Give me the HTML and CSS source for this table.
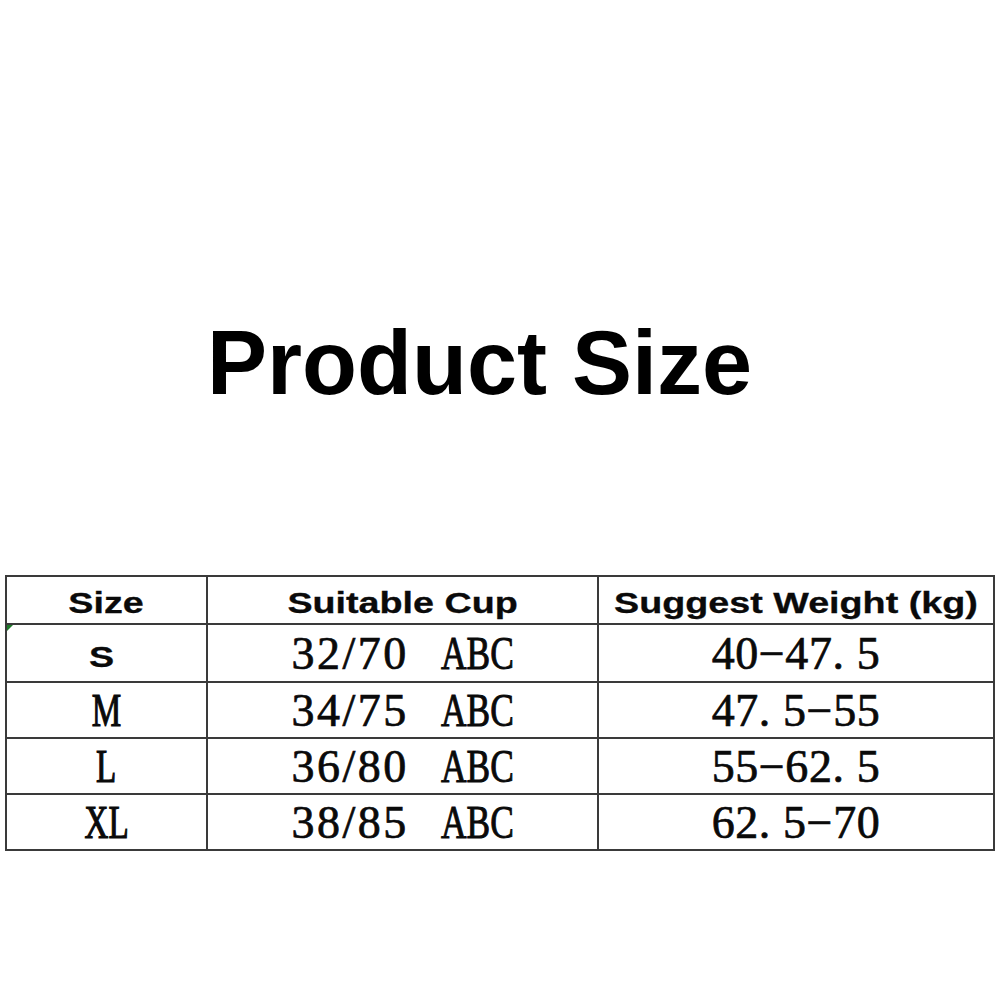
FILE: index.html
```html
<!DOCTYPE html>
<html lang="en">
<head>
<meta charset="utf-8">
<title>Product Size</title>
<link rel="stylesheet" href="styles.css">
</head>
<body>
<main class="page">
  <h1 class="title">Product Size</h1>
  <table class="size-table">
    <colgroup>
      <col class="c1">
      <col class="c2">
      <col class="c3">
    </colgroup>
    <thead>
      <tr class="head-row">
        <th><span class="wide">Size</span></th>
        <th><span class="wide">Suitable Cup</span></th>
        <th><span class="wide">Suggest Weight (kg)</span></th>
      </tr>
    </thead>
    <tbody>
      <tr class="row first">
        <td class="size marked"><span class="wide shift">S</span></td>
        <td><span class="num">32/70</span><span class="abc">ABC</span></td>
        <td><span class="wt">40−47. 5</span></td>
      </tr>
      <tr class="row">
        <td class="size"><span class="narrow">M</span></td>
        <td><span class="num">34/75</span><span class="abc">ABC</span></td>
        <td><span class="wt">47. 5−55</span></td>
      </tr>
      <tr class="row">
        <td class="size"><span class="narrow">L</span></td>
        <td><span class="num">36/80</span><span class="abc">ABC</span></td>
        <td><span class="wt">55−62. 5</span></td>
      </tr>
      <tr class="row">
        <td class="size"><span class="narrow">XL</span></td>
        <td><span class="num">38/85</span><span class="abc">ABC</span></td>
        <td><span class="wt">62. 5−70</span></td>
      </tr>
    </tbody>
  </table>
</main>
</body>
</html>
```
FILE: styles.css
```css
html, body {
  margin: 0;
  padding: 0;
  background: #ffffff;
}

.page {
  width: 1000px;
  height: 1000px;
  padding-top: 313px;
  box-sizing: border-box;
}

.title {
  margin: 0;
  padding-left: 207px;
  font-family: "Liberation Sans", Arial, sans-serif;
  font-weight: 700;
  font-size: 90px;
  line-height: 100px;
  color: #000;
  white-space: nowrap;
}

.size-table {
  margin: 162px 0 0 5px;
  width: 988px;
  border-collapse: collapse;
  table-layout: fixed;
}

.c1 { width: 201px; }
.c2 { width: 391px; }
.c3 { width: 396px; }

.size-table th,
.size-table td {
  border: 2px solid #3a3a3a;
  padding: 0;
  text-align: center;
  vertical-align: middle;
  color: #0a0a0a;
  white-space: pre;
}

.head-row { height: 48px; }
.row { height: 56px; }
.row.first { height: 58px; }

.size-table th {
  font-family: "Liberation Sans", Arial, sans-serif;
  font-weight: 700;
  font-size: 29px;
  line-height: 30px;
  padding-top: 6px;
  -webkit-text-stroke: 0.3px #0a0a0a;
}

.wide {
  display: inline-block;
  transform: scaleX(1.3);
}

.size-table td {
  font-family: "Liberation Serif", "Times New Roman", serif;
  font-size: 46px;
  line-height: 46px;
  padding-top: 2px;
  -webkit-text-stroke: 0.7px #0a0a0a;
}

.size-table td.size .wide {
  font-family: "Liberation Sans", Arial, sans-serif;
  font-weight: 700;
  font-size: 29px;
  line-height: 46px;
  -webkit-text-stroke: 0.3px #0a0a0a;
}

.shift {
  margin-right: 10px;
}

.marked {
  position: relative;
}

.marked::before {
  content: "";
  position: absolute;
  left: 0;
  top: 0;
  border-top: 6px solid #1f7a2a;
  border-right: 6px solid transparent;
}

.narrow {
  display: inline-block;
  transform: scaleX(0.72);
  -webkit-text-stroke: 1.2px #0a0a0a;
}

.num {
  letter-spacing: 2.5px;
}

.abc {
  display: inline-block;
  margin-left: 32px;
  margin-right: -22px;
  transform: scaleX(0.77);
  transform-origin: left center;
  -webkit-text-stroke: 1px #0a0a0a;
}

.wt {
  display: inline-block;
  letter-spacing: 0.6px;
}
```
